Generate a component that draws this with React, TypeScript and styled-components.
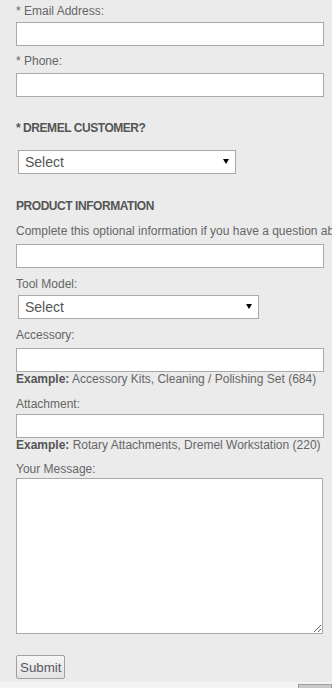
import React from "react";
import styled, { createGlobalStyle } from "styled-components";

const Global = createGlobalStyle`
  html, body {
    margin: 0;
    padding: 0;
    background: #ebebeb;
    overflow: hidden;
  }
  body {
    font-family: "Liberation Sans", Arial, sans-serif;
  }
`;

const Page = styled.div`
  width: 332px;
  height: 688px;
  display: flex;
  flex-direction: column;
  overflow: hidden;
`;

const Form = styled.form`
  flex: 1;
  display: flex;
  flex-direction: column;
  align-items: flex-start;
  padding: 4px 0 0 16px;
  box-sizing: border-box;
  overflow: hidden;
`;

const Label = styled.label<{ $mt?: number; $mb?: number }>`
  display: block;
  font-size: 12px;
  line-height: 14px;
  color: #666;
  margin-top: ${(p) => p.$mt ?? 0}px;
  margin-bottom: ${(p) => p.$mb ?? 4}px;
  white-space: nowrap;
`;

const Heading = styled.h3<{ $mt: number; $mb: number }>`
  margin: ${(p) => p.$mt}px 0 ${(p) => p.$mb}px 0;
  font-size: 12px;
  line-height: 14px;
  font-weight: bold;
  color: #555;
  letter-spacing: -0.45px;
`;

const Intro = styled.p`
  margin: 11px 0 6px 0;
  font-size: 12px;
  line-height: 14px;
  color: #666;
  white-space: nowrap;
`;

const TextInput = styled.input`
  display: block;
  width: 308px;
  height: 24px;
  box-sizing: border-box;
  border: 1px solid #a9a9a9;
  background: #fff;
  margin: 0;
  padding: 2px 4px;
  font: 12px "Liberation Sans", Arial, sans-serif;
`;

const SelectWrap = styled.div<{ $w: number; $ml: number }>`
  position: relative;
  width: ${(p) => p.$w}px;
  height: 24px;
  margin-left: ${(p) => p.$ml}px;
  &::after {
    content: "";
    position: absolute;
    right: 7px;
    top: 9px;
    width: 0;
    height: 0;
    border-left: 3.5px solid transparent;
    border-right: 3.5px solid transparent;
    border-top: 5px solid #000;
    pointer-events: none;
  }
`;

const Select = styled.select`
  appearance: none;
  -webkit-appearance: none;
  display: block;
  width: 100%;
  height: 24px;
  box-sizing: border-box;
  border: 1px solid #a9a9a9;
  border-radius: 0;
  background: #fff;
  margin: 0;
  padding: 0 0 0 6px;
  font: 14px "Liberation Sans", Arial, sans-serif;
  color: #555;
`;

const Example = styled.div`
  font-size: 12px;
  line-height: 14px;
  color: #666;
  white-space: nowrap;
  b {
    color: #555;
  }
`;

const Message = styled.textarea`
  display: block;
  width: 307px;
  height: 156px;
  box-sizing: border-box;
  border: 1px solid #a9a9a9;
  background: #fff;
  margin: 0;
  resize: both;
`;

const Submit = styled.button`
  margin-top: 21px;
  height: 24px;
  padding: 0 3px;
  box-sizing: border-box;
  border: 1px solid #a0a0a0;
  border-radius: 2px;
  background: linear-gradient(#f6f6f6, #e3e3e3);
  font: 13.33px "Liberation Sans", Arial, sans-serif;
  color: #585868;
`;

const Footer = styled.div`
  height: 6px;
  background: #f4f4f4;
  display: flex;
  justify-content: flex-end;
  align-items: flex-end;
`;

const FooterTab = styled.div`
  width: 34px;
  height: 4px;
  box-sizing: border-box;
  background: #c9c9c9;
  border: 1px solid #9e9e9e;
  border-bottom: none;
`;

export default function App() {
  return (
    <Page>
      <Global />
      <Form onSubmit={(e) => e.preventDefault()}>
        <Label>* Email Address:</Label>
        <TextInput type="text" />
        <Label $mt={8} $mb={5}>* Phone:</Label>
        <TextInput type="text" />
        <Heading $mt={24} $mb={15}>* DREMEL CUSTOMER?</Heading>
        <SelectWrap $w={218} $ml={2}>
          <Select defaultValue="">
            <option value="">Select</option>
          </Select>
        </SelectWrap>
        <Heading $mt={25} $mb={0}>PRODUCT INFORMATION</Heading>
        <Intro>Complete this optional information if you have a question about a specific product.</Intro>
        <TextInput type="text" />
        <Label $mt={9} $mb={4}>Tool Model:</Label>
        <SelectWrap $w={241} $ml={2}>
          <Select defaultValue="">
            <option value="">Select</option>
          </Select>
        </SelectWrap>
        <Label $mt={9} $mb={6}>Accessory:</Label>
        <TextInput type="text" />
        <Example>
          <b>Example:</b> Accessory Kits, Cleaning / Polishing Set (684)
        </Example>
        <Label $mt={11} $mb={3}>Attachment:</Label>
        <TextInput type="text" />
        <Example>
          <b>Example:</b> Rotary Attachments, Dremel Workstation (220)
        </Example>
        <Label $mt={10} $mb={2}>Your Message:</Label>
        <Message />
        <Submit type="submit">Submit</Submit>
      </Form>
      <Footer>
        <FooterTab />
      </Footer>
    </Page>
  );
}
